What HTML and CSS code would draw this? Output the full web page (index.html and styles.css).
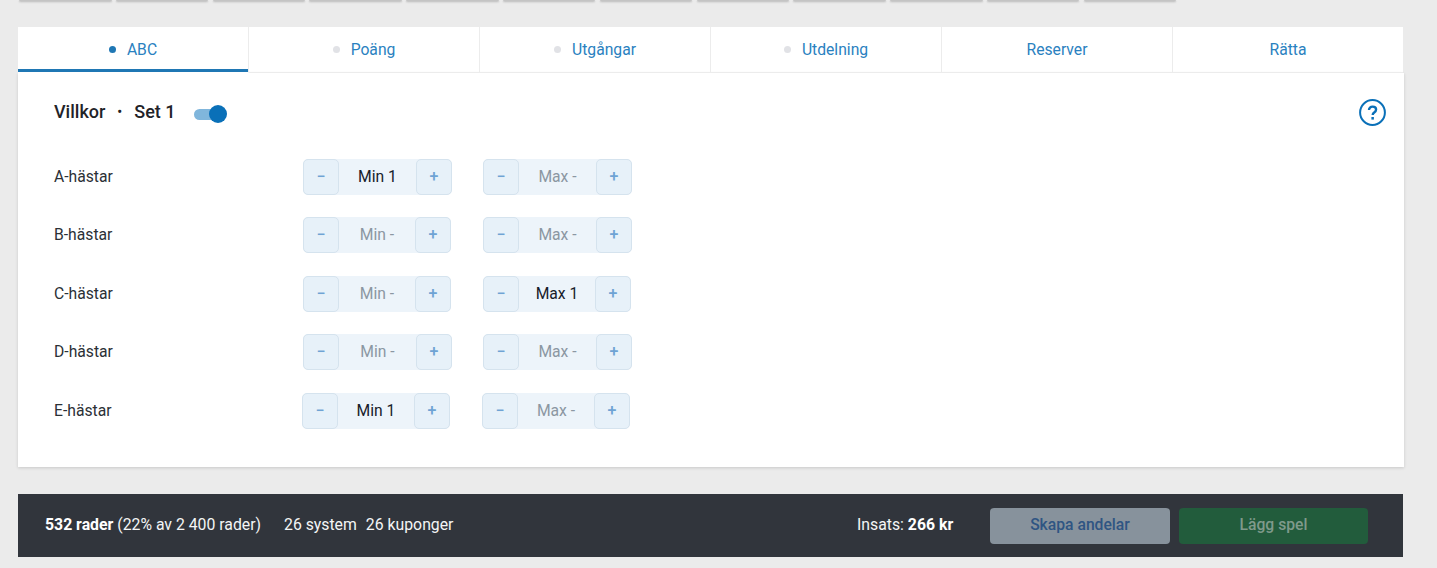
FILE: index.html
```html
<!DOCTYPE html>
<html lang="sv">
<head>
<meta charset="utf-8">
<title>Villkor</title>
<link rel="stylesheet" href="styles.css">
</head>
<body>
<div class="strip">
  <span class="chip"></span><span class="chip"></span><span class="chip"></span><span class="chip"></span>
  <span class="chip"></span><span class="chip"></span><span class="chip"></span><span class="chip"></span>
  <span class="chip"></span><span class="chip"></span><span class="chip"></span><span class="chip"></span>
</div>
<main class="content">
  <nav class="tabs">
    <a class="tab tab-active"><i class="dot dot-on"></i>ABC</a>
    <a class="tab"><i class="dot"></i>Poäng</a>
    <a class="tab"><i class="dot"></i>Utgångar</a>
    <a class="tab"><i class="dot"></i>Utdelning</a>
    <a class="tab">Reserver</a>
    <a class="tab tab-last">Rätta</a>
  </nav>
  <section class="panel">
    <header class="panel-head">
      <h2 class="title">Villkor<span class="sep">•</span>Set 1</h2>
      <span class="toggle"><span class="toggle-track"></span><span class="toggle-knob"></span></span>
      <svg class="help" width="27" height="27" viewBox="0 0 27 27" aria-label="Hjälp">
        <circle cx="13.5" cy="13.500" r="12.400" fill="none" stroke="#0a70b8" stroke-width="2"/>
        <path d="M10 11c0-2 1.500-3.400 3.600-3.400s3.500 1.300 3.500 3c0 1.500-.9 2.200-1.900 2.900-1 .7-1.500 1.300-1.500 2.500" fill="none" stroke="#0a70b8" stroke-width="2.400"/>
        <rect x="12.400" y="18" width="2.500" height="2.600" fill="#0a70b8"/>
      </svg>
    </header>
    <div class="row">
      <span class="row-label">A-hästar</span>
      <div class="stepper wide"><button class="step">−</button><span class="value set">Min 1</span><button class="step">+</button></div>
      <div class="stepper wide"><button class="step">−</button><span class="value">Max -</span><button class="step">+</button></div>
    </div>
    <div class="row">
      <span class="row-label">B-hästar</span>
      <div class="stepper"><button class="step">−</button><span class="value">Min -</span><button class="step">+</button></div>
      <div class="stepper wide"><button class="step">−</button><span class="value">Max -</span><button class="step">+</button></div>
    </div>
    <div class="row">
      <span class="row-label">C-hästar</span>
      <div class="stepper"><button class="step">−</button><span class="value">Min -</span><button class="step">+</button></div>
      <div class="stepper"><button class="step">−</button><span class="value set">Max 1</span><button class="step">+</button></div>
    </div>
    <div class="row">
      <span class="row-label">D-hästar</span>
      <div class="stepper wide"><button class="step">−</button><span class="value">Min -</span><button class="step">+</button></div>
      <div class="stepper wide"><button class="step">−</button><span class="value">Max -</span><button class="step">+</button></div>
    </div>
    <div class="row row-tight">
      <span class="row-label">E-hästar</span>
      <div class="stepper"><button class="step">−</button><span class="value set">Min 1</span><button class="step">+</button></div>
      <div class="stepper"><button class="step">−</button><span class="value">Max -</span><button class="step">+</button></div>
    </div>
  </section>
  <footer class="bar">
    <div class="summary"><b>532 rader</b> (22% av 2 400 rader)</div>
    <div class="counts"><span>26 system</span><span>26 kuponger</span></div>
    <div class="stake">Insats: <b>266 kr</b></div>
    <button class="btn btn-share">Skapa andelar</button>
    <button class="btn btn-play">Lägg spel</button>
  </footer>
</main>
</body>
</html>
```

FILE: styles.css
```css
* { box-sizing: border-box; }
html, body { margin: 0; height: 568px; overflow: hidden; }
body {
  background: #ebebeb;
  font-family: Roboto, "Liberation Sans", sans-serif;
  color: #1f2328;
}
.strip { display: flex; gap: 4.3px; padding-left: 19px; height: 1px; }
.chip { width: 92.5px; height: 1px; background: #c4c4c4; box-shadow: 0 1px 2px rgba(0,0,0,.3); border-radius: 0 0 2px 2px; }
.content { padding: 26px 0 0 18px; width: 1404px; }
.tabs { display: flex; height: 46px; width: 1385px; background: #fff; }
.tab {
  flex: 1 1 0; display: flex; align-items: center; justify-content: center;
  height: 46px;
  font-size: 15.7px; color: #2a81c0;
  border-right: 1px solid #ececec; border-bottom: 1px solid #ececec;
}
.tab-last { border-right: 0; }
.tab-active { border-bottom-color: #fff; box-shadow: inset 0 -3px 0 #1f77b4; }
.dot { width: 7px; height: 7px; border-radius: 50%; background: #e1e2e6; margin-right: 11px; }
.dot-on { background: #1f77b4; }
.panel {
  background: #fff; width: 1386px; height: 394px; padding: 0 0 0 36px;
  box-shadow: 0 1px 3px rgba(0,0,0,.15);
}
.panel-head { display: flex; align-items: center; height: 86px; position: relative; }
.title { margin: 0; font-size: 18px; font-weight: 500; color: #1f2328; position: relative; top: -5px; }
.sep { font-size: 14px; margin: 0 12px; position: relative; top: -1px; }
.toggle { position: relative; width: 33px; height: 18px; margin-left: 18px; top: -2px; }
.toggle-track { display: block; width: 28px; height: 11px; margin-top: 3.5px; border-radius: 6px; background: #80b6dc; }
.toggle-knob { position: absolute; right: 0; top: 0; width: 18px; height: 18px; border-radius: 50%; background: #0a70b8; }
.help { position: absolute; left: 1305px; top: 26px; }
.row { display: grid; grid-template-columns: 249px 180px auto; justify-content: start; align-items: center; height: 36px; margin-bottom: 22.4px; }
.row-tight { grid-template-columns: 248px 180px auto; }
.row-label { font-size: 15.7px; color: #2b3036; position: relative; top: -0.5px; }
.stepper { display: flex; width: 148px; height: 36px; background: #edf4fa; border-radius: 5px; }
.stepper.wide { width: 149px; }
.value { flex: 1; text-align: center; font-size: 15.7px; line-height: 36px; color: #8b97a2; }
.value.set { color: #17202a; }
.step {
  width: 36px; height: 36px; padding: 0; flex: none;
  font: 500 16px/34px Roboto, sans-serif; color: #6fa3d4;
  background: #e7f1f9; border: 1px solid #d5e3ee; border-radius: 5px;
}
.bar {
  display: flex; align-items: center; width: 1385px; height: 63px; margin-top: 27px;
  padding: 0 35px 0 27px; background: #31353c; color: #f4f5f6; font-size: 15.800px;
}
.summary { width: 239px; position: relative; top: -1px; }
.summary b, .stake b { font-weight: 700; color: #fff; }
.counts { display: flex; gap: 9px; position: relative; top: -1px; }
.stake { margin-left: auto; width: 133px; position: relative; top: -1px; }
.btn { height: 36px; border: 0; border-radius: 4px; font: 500 15.700px Roboto, sans-serif; padding: 0 0 2px; }
.btn-share { width: 180px; margin-right: 9px; background: #87929c; color: #2f5583; }
.btn-play { width: 189px; background: #225c3c; color: #7f9a8b; }
```
